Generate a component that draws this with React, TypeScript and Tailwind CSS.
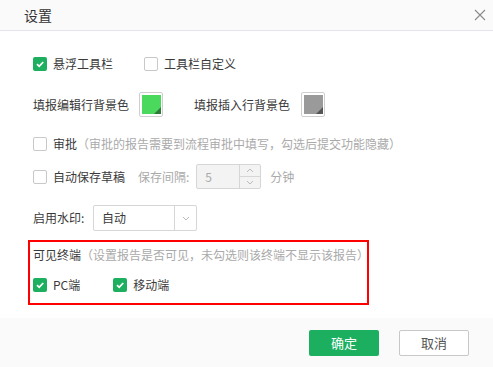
const font = { fontFamily: '"Noto Sans CJK SC", "Noto Sans", sans-serif' };

function Check({ checked, className = "" }: { checked?: boolean; className?: string }) {
  if (checked) {
    return (
      <span className={`flex h-[14px] w-[14px] shrink-0 items-center justify-center rounded-[2px] bg-[#1daf60] ${className}`}>
        <svg width="10" height="10" viewBox="0 0 10 10">
          <path d="M2 5.2 L4.2 7.3 L8.2 3" fill="none" stroke="#fff" strokeWidth="1.8" />
        </svg>
      </span>
    );
  }
  return <span className={`block h-[14px] w-[14px] shrink-0 rounded-[2px] border border-[#c8c8c8] bg-white ${className}`} />;
}

function Swatch({ fill, corner, className = "" }: { fill: string; corner: string; className?: string }) {
  return (
    <span className={`flex h-[25px] w-[24px] shrink-0 items-center justify-center rounded-[2px] border border-[#cfcfcf] bg-white ${className}`}>
      <svg width="19" height="19" viewBox="0 0 19 19">
        <rect width="19" height="19" fill={fill} />
        <path d="M19 12 L19 19 L12 19 Z" fill={corner} />
      </svg>
    </span>
  );
}

export default function App() {
  return (
    <div className="flex h-[367px] w-[493px] flex-col whitespace-nowrap bg-white text-[12px] text-[#3a3a3a]" style={font}>
      <div className="flex h-[31px] shrink-0 items-center justify-between border-b border-[#e4e4ec] bg-[#fafafa] pl-[24px] pr-[5px]">
        <span className="text-[14px] text-[#333]">设置</span>
        <svg width="14" height="14" viewBox="0 0 14 14" className="mr-[1px]">
          <path d="M2 2 L12 12 M12 2 L2 12" stroke="#8a8a8a" strokeWidth="1.1" />
        </svg>
      </div>

      <div className="flex flex-col pl-[33px]">
        <div className="mt-[25px] flex h-[16px] items-center">
          <Check checked />
          <span className="ml-[6px]">悬浮工具栏</span>
          <Check className="ml-[31px]" />
          <span className="ml-[6px]">工具栏自定义</span>
        </div>

        <div className="mt-[20px] flex h-[25px] items-center">
          <span>填报编辑行背景色</span>
          <Swatch className="ml-[10px]" fill="#4ad95c" corner="#2f7a3a" />
          <span className="ml-[31px]">填报插入行背景色</span>
          <Swatch className="ml-[11px]" fill="#9a9a9a" corner="#555" />
        </div>

        <div className="mt-[19px] flex h-[16px] items-center">
          <Check />
          <span className="ml-[6px]">审批</span>
          <span className="text-[#aaa]">（审批的报告需要到流程审批中填写，勾选后提交功能隐藏）</span>
        </div>

        <div className="mt-[12px] flex h-[25px] items-center">
          <Check />
          <span className="ml-[6px]">自动保存草稿</span>
          <span className="ml-[13px] text-[#aaa]">保存间隔:</span>
          <div className="ml-[7px] flex h-[25px] w-[65px] rounded-[2px] border border-[#d6d6d6] bg-[#f3f3f3]">
            <span className="flex flex-1 items-center pl-[8px] text-[#aaa]">5</span>
            <div className="flex w-[21px] flex-col border-l border-[#d6d6d6]">
              <span className="flex flex-1 items-center justify-center border-b border-[#d6d6d6]">
                <svg width="8" height="5" viewBox="0 0 8 5"><path d="M1 4 L4 1 L7 4" fill="none" stroke="#bbb" /></svg>
              </span>
              <span className="flex flex-1 items-center justify-center">
                <svg width="8" height="5" viewBox="0 0 8 5"><path d="M1 1 L4 4 L7 1" fill="none" stroke="#bbb" /></svg>
              </span>
            </div>
          </div>
          <span className="ml-[9px] text-[#aaa]">分钟</span>
        </div>

        <div className="mt-[16px] flex h-[26px] items-center">
          <span className="w-[60px]">启用水印:</span>
          <div className="flex h-[26px] w-[104px] rounded-[2px] border border-[#d6d6d6] bg-white">
            <span className="flex flex-1 items-center pl-[8px]">自动</span>
            <span className="flex w-[22px] items-center justify-center border-l border-[#d6d6d6]">
              <svg width="8" height="5" viewBox="0 0 8 5"><path d="M1 1 L4 4 L7 1" fill="none" stroke="#bbb" /></svg>
            </span>
          </div>
        </div>
      </div>

      <div className="ml-[28px] mt-[9px] flex h-[65px] w-[341px] flex-col border-2 border-[#ff0000] pl-[3px]">
        <div className="mt-[5px] flex h-[16px] items-center">
          <span>可见终端</span>
          <span className="text-[#aaa]">（设置报告是否可见，未勾选则该终端不显示该报告）</span>
        </div>
        <div className="mt-[14px] flex h-[16px] items-center">
          <Check checked />
          <span className="ml-[6px]">PC端</span>
          <Check checked className="ml-[33px]" />
          <span className="ml-[6px]">移动端</span>
        </div>
      </div>

      <div className="mt-[13px] flex flex-1 items-start justify-end gap-[20px] bg-[#fafafa] pr-[24px] pt-[12px]">
        <button className="flex h-[26px] w-[70px] items-center justify-center rounded-[2px] bg-[#1daf60] text-[13px] text-white">
          确定
        </button>
        <button className="flex h-[26px] w-[70px] items-center justify-center rounded-[2px] border border-[#c8c8c8] bg-white text-[13px] text-[#555]">
          取消
        </button>
      </div>
    </div>
  );
}
